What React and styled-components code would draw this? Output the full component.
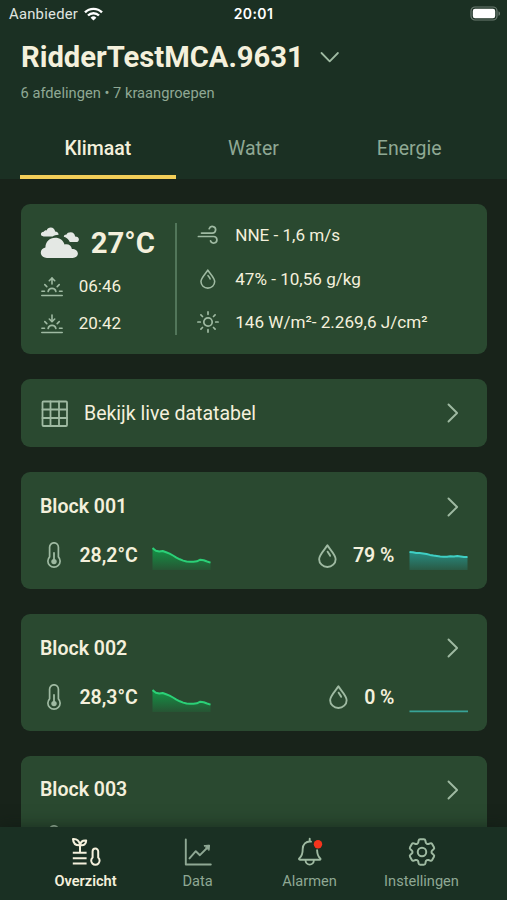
import React, { Component } from 'react';
import styled, { createGlobalStyle } from 'styled-components';
import { HiOutlineCog6Tooth } from 'react-icons/hi2';

const GlobalStyle = createGlobalStyle`
  * {
    box-sizing: border-box;
  }

  body {
    margin: 0;
    background: #18231a;
    color: #f4f0dc;
    font-family: Roboto, 'Liberation Sans', sans-serif;
  }

  svg {
    display: block;
    flex: none;
    fill: none;
    stroke-linecap: round;
    stroke-linejoin: round;
  }
`

const Screen = styled.div`
  display: flex;
  flex-direction: column;
  width: 507px;
  height: 900px;
  overflow: hidden;
`

const TopArea = styled.header`
  flex: none;
  height: 179px;
  padding: 0 20px;
  background: #1b3023;
`

const StatusBar = styled.div`
  display: grid;
  grid-template-columns: 1fr auto 1fr;
  align-items: center;
  height: 27px;
  margin: 0 -11px;
  color: #fff;
  font-size: 14.8px;
`

const Carrier = styled.div`
  display: flex;
  align-items: center;
  gap: 6px;
  letter-spacing: 0.25px;
  color: #e0e5e0;
`

const Clock = styled.div`
  font-family: Inter, Roboto, sans-serif;
  font-weight: 600;
  font-size: 14px;
  letter-spacing: 0.4px;
`

const Battery = styled.div`
  justify-self: end;
  margin-right: -3px;
`

const TitleRow = styled.div`
  display: flex;
  align-items: center;
  gap: 16px;
  height: 60px;
  padding-left: 1px;
`

const Title = styled.h1`
  margin: 0;
  font-size: 29.2px;
  font-weight: 700;
  line-height: 60px;
  white-space: nowrap;
`

const Subtitle = styled.p`
  margin: -2px 0 0;
  padding-left: 0.5px;
  color: #8fa894;
  font-size: 14.7px;
  line-height: 16px;
`

const Tabs = styled.nav`
  display: grid;
  grid-template-columns: repeat(3, 1fr);
  height: 63px;
  margin-top: 15px;
`

const Tab = styled.a`
  padding-top: 21px;
  border-bottom: 4px solid ${props => (props.$active ? '#f2ce58' : 'transparent')};
  color: ${props => (props.$active ? '#f4f0dc' : '#8fa894')};
  font-size: 19.5px;
  font-weight: ${props => (props.$active ? 500 : 400)};
  line-height: 24px;
  text-align: center;
`

const Content = styled.main`
  display: flex;
  flex: 1;
  flex-direction: column;
  gap: 24.8px;
  min-height: 0;
  padding: 25px 20px 0 20.7px;
  overflow: hidden;
`

const Card = styled.section`
  flex: none;
  border-radius: 9px;
  background: #2a4930;
`

const WeatherCard = styled(Card)`
  display: flex;
  height: 150.3px;
  padding: 19px;
`

const Current = styled.div`
  display: flex;
  flex-direction: column;
  width: 137px;
  border-right: 2px solid #52765a;
`

const Temperature = styled.div`
  display: flex;
  flex: none;
  align-items: center;
  gap: 11px;
  height: 44px;
  padding-bottom: 5px;
  font-size: 29.3px;
  font-weight: 700;
`

const SunTime = styled.div`
  display: flex;
  flex: none;
  align-items: center;
  gap: 16px;
  height: 37px;
  padding-left: 1px;
  font-size: 17px;

  svg {
    margin-top: 2px;
  }
`

const Measurements = styled.div`
  display: flex;
  flex-direction: column;
  justify-content: space-between;
  margin: -1px 0 0 20px;
`

const Measurement = styled.div`
  display: grid;
  grid-template-columns: 22px 1fr;
  column-gap: 16.5px;
  align-items: center;
  justify-items: center;
  height: 26px;
  font-size: 17.1px;
  white-space: nowrap;

  span {
    justify-self: start;
  }
`

const LinkCard = styled(Card)`
  display: flex;
  align-items: center;
  height: 68.4px;
  padding: 0 28px 0 20px;
  font-size: 19.5px;

  span {
    flex: 1;
    padding-left: 16.3px;
  }
`

const BlockCard = styled(Card)`
  height: 116.9px;
  padding: 19.3px 19px 19px 19.3px;
`

const BlockHeader = styled.div`
  display: flex;
  align-items: center;
  justify-content: space-between;
  height: 30px;
  padding-right: 9px;
  font-size: 19.5px;
  font-weight: 600;
`

const BlockValues = styled.div`
  display: flex;
  align-items: center;
  justify-content: space-between;
  height: 34px;
  margin-top: 17px;
`

const Value = styled.div`
  display: flex;
  align-items: center;
  padding-left: ${props => (props.$indent ? '7.5px' : 0)};
  font-size: 19.5px;
  font-weight: 600;

  span {
    padding: 0 14.5px 0 ${props => (props.$indent ? '18px' : '16px')};
  }
`

const ChartBox = styled.div`
  padding-top: 7px;
`

const BottomBar = styled.nav`
  display: grid;
  grid-template-columns: repeat(4, 112px);
  justify-content: center;
  flex: none;
  position: relative;
  height: 73px;
  background: #1a3023;
  box-shadow: 0 -2px 14px rgba(14, 26, 17, 0.5);
`

const BarItem = styled.a`
  display: flex;
  flex-direction: column;
  align-items: center;
  color: ${props => (props.$active ? '#f4f0dc' : '#8fa894')};
  font-size: 14.6px;
  font-weight: ${props => (props.$active ? 600 : 400)};
  line-height: 18px;
`

const BarIcon = styled.div`
  display: flex;
  align-items: center;
  justify-content: center;
  height: 45px;
  padding-top: 5px;
`

const line = '#9fbaa2'

const WifiIcon = () => (
  <svg width="19" height="14" viewBox="0 0 19 14">
    <g stroke="#fff" strokeWidth="2.4" strokeLinecap="butt">
      <path d="M1 5.4a12 12 0 0 1 17 0" />
      <path d="M4 8.5a7.8 7.8 0 0 1 11 0" />
    </g>
    <path d="M9.5 13.6 6.6 10.7a4.2 4.2 0 0 1 5.8 0z" fill="#fff" />
  </svg>
)

const BatteryIcon = () => (
  <svg width="31" height="15" viewBox="0 0 31 15">
    <rect x="1" y="1" width="26" height="13" rx="4" stroke="#6d7c72" strokeWidth="1.2" />
    <rect x="2.8" y="2.8" width="22.4" height="9.4" rx="2.2" fill="#fff" />
    <path d="M28.5 5.2c2 .8 2 3.8 0 4.6z" fill="#6d7c72" />
  </svg>
)

const ChevronDown = () => (
  <svg width="20" height="12" viewBox="0 0 20 12" stroke={line} strokeWidth="1.8">
    <path d="m1.5 2 8.2 8.3L17.9 2" />
  </svg>
)

const ChevronRight = () => (
  <svg width="12" height="20" viewBox="0 0 12 20" stroke={line} strokeWidth="1.9">
    <path d="m1.5 1.5 8.6 8.5-8.6 8.5" />
  </svg>
)

const CloudsIcon = () => (
  <svg width="40" height="32" viewBox="0 0 40 32">
    <g fill="#e4e8e4">
      <path d="M3.6 9.4C1.9 9.4.9 8.4.9 7.1c0-1.5 1.2-2.5 2.9-2.4C4.4 3.7 5.5 3.1 6.7 3.4 7.3 1.6 8.8.6 10.7.6c2.5 0 4.3 1.7 4.4 4 2.2.1 3.5 1.5 3.5 3.1-2.5.1-4.4.7-6 1.7z" />
      <path d="M23.8 9.8c.1-1.5 1.3-2.4 2.8-2.3C27 6 28.6 5.3 30.7 5.3c2.5 0 4.2 1.7 4.4 4.1 2.3 0 3.8 1.3 3.8 3 0 1.6-1.2 2.6-2.9 2.6h-6.2c-1-2.6-3.1-4.3-6-5.2z" />
      <path d="M6.8 30.9C3.2 30.9.8 28.6.8 25.6c0-2.7 1.8-4.6 4.6-5.1.2-5.8 4.2-9.7 9.7-9.7 4.7 0 8.2 2.7 9.4 6.7 4-.9 6.8 1.1 7.4 4.4 3.6 0 6 1.9 6 4.6 0 2.6-2.1 4.4-5.2 4.4z" />
    </g>
  </svg>
)

const SunHorizonIcon = ({ down }) => (
  <svg width="22" height="20" viewBox="0 0 22 20" stroke={line} strokeWidth="1.6">
    <path d="M11 1v6" />
    <path d={down ? 'm8.3 5 2.7 2.7L13.7 5' : 'M8.3 3.7 11 1l2.7 2.7'} />
    <path d="M7.1 14.5a4 4 0 0 1 7.8 0M3.8 7.6l2 2M18.2 7.6l-2 2M.9 14.2h2.6M18.5 14.2h2.6M.8 18.5h20.4" />
  </svg>
)

const WindIcon = () => (
  <svg width="22" height="20" viewBox="0 0 22 20" stroke={line} strokeWidth="1.7">
    <path d="M4.5 8.1h10.8a3.3 3.3 0 1 0-3.1-4.4" />
    <path d="M1.4 11.5h15.2a3.3 3.3 0 1 1-3.1 4.4" />
  </svg>
)

const DropIcon = ({ size = 24, weight = 1.8 }) => (
  <svg width={size * 18 / 23} height={size} viewBox="0 0 18 23" stroke={line} strokeWidth={weight}>
    <path d="M9 1.2C7.6 4 1.1 10.2 1.1 14.5a7.9 7.5 0 0 0 15.8 0C16.9 10.2 10.4 4 9 1.2z" />
    <path d="M9.2 7.4c.6 1.4 2 2.2 2.4 4" />
  </svg>
)

const SunIcon = () => (
  <svg width="22" height="22" viewBox="0 0 22 22" stroke={line} strokeWidth="1.7">
    <circle cx="11" cy="11" r="4.2" />
    <path d="M11 .9v2.4M11 18.7v2.4M.9 11h2.4M18.7 11h2.4M3.9 3.9l1.6 1.6M16.5 16.5l1.6 1.6M3.9 18.1l1.6-1.6M16.5 5.5l1.6-1.6" />
  </svg>
)

const GridIcon = () => (
  <svg width="27" height="27" viewBox="0 0 27 27" stroke={line} strokeWidth="1.8">
    <rect x="1.5" y="1.5" width="24.5" height="24.5" rx="1" />
    <path d="M9.5 1.5V26M18 1.5V26M1.5 9.5H26M1.5 18H26" />
  </svg>
)

const ThermometerIcon = () => (
  <svg width="14" height="27" viewBox="0 0 14 27" stroke={line} strokeWidth="1.7">
    <path d="M2.6 5.2a4.4 4.4 0 0 1 8.8 0v9.7a6.1 6.1 0 1 1-8.8 0z" />
    <path d="M7 11v8" strokeWidth="1.8" />
    <circle cx="7" cy="19.6" r="2.7" fill={line} stroke="none" />
  </svg>
)

const OverviewIcon = () => (
  <svg width="30" height="30" viewBox="0 0 30 30" stroke="#f4f0dc" strokeWidth="2">
    <path d="M9 15V7.5M9 8.3C4.6 8.5 2.2 6 2 2.1 6 1.8 8.7 4 9 8.3zM9.3 8C9.6 4.8 11.8 3.2 15.2 3.5 15.2 7 12.8 8.9 9.3 8z" />
    <path d="M1.8 15.8h13.8M1.8 21.2h13.8M1.8 26.6h13.8" strokeLinecap="butt" />
    <path d="M21.6 14.4a2.8 2.8 0 0 1 5.6 0v6a4.2 4.2 0 1 1-5.6 0z" />
  </svg>
)

const TrendIcon = () => (
  <svg width="28" height="28" viewBox="0 0 28 28" stroke="#8fa894" strokeWidth="1.9">
    <path d="M1.8 1.5v25h25" />
    <path d="m5.5 20.4 6.3-7.2 4.1 4L25 8" />
    <path d="m20.3 7.6 5.2-.5-.4 5z" fill="#8fa894" strokeWidth="1" />
  </svg>
)

const BellIcon = () => (
  <svg width="26" height="30" viewBox="0 0 26 30" stroke={line} strokeWidth="1.9">
    <path d="M14 4.6c-5.2-.6-8.3 3-8.3 7.4 0 5-.9 7.4-3.3 9.2-.8.7-.4 1.5.5 1.5h19.7c1 0 1.3-.9.5-1.5-2-1.6-2.8-3.6-3-7.9" />
    <path d="M12.7 4V1.8M8.6 23.5a4.1 4.1 0 0 0 8.2 0" />
    <circle cx="21" cy="7.3" r="4.2" fill="#f5341d" stroke="none" />
  </svg>
)

const green = [0, 2.7, 3.4, 3, 4.2, 5.6, 7.5, 9.6, 11.3, 12.6, 13.5, 13.8, 13.7, 13.3, 11.7, 12.3, 13.5, 14.6]
const teal = [4.1, 4.3, 5, 5.1, 5.4, 6, 6.9, 7.5, 8, 8.5, 8.8, 8.8, 8.3, 8.4, 8, 8.4, 9, 9]

const Sparkline = ({ id, points, color, top, fade }) => {
  const step = 58 / (points.length - 1)
  const path = points.map((y, i) => `${i ? 'L' : 'M'}${(i * step + 0.5).toFixed(1)} ${y + 1}`).join('')
  return (
    <svg width="59" height="24" viewBox="0 0 59 24">
      <defs>
        <linearGradient id={id} x1="0" y1="0" x2="0" y2="1">
          <stop offset="0" stopColor={top} />
          <stop offset="1" stopColor={top} stopOpacity={fade} />
        </linearGradient>
      </defs>
      <path d={`${path}V23H.5z`} fill={`url(#${id})`} />
      <path d={path} stroke={color} strokeWidth="2" strokeLinecap="butt" />
    </svg>
  )
}

const FlatLine = () => (
  <svg width="59" height="24" viewBox="0 0 59 24">
    <path d="M.5 22.4H59" stroke="#38a397" strokeWidth="1.8" strokeLinecap="butt" />
  </svg>
)

// a block without readings only gets its icon
const blocks = [
  { id: 1, name: 'Block 001', temperature: '28,2°C', humidity: '79 %', history: teal },
  { id: 2, name: 'Block 002', temperature: '28,3°C', humidity: '0 %', history: null },
  { id: 3, name: 'Block 003' },
]

const Block = ({ block }) => (
  <BlockCard>
    <BlockHeader>
      {block.name}
      <ChevronRight />
    </BlockHeader>
    <BlockValues>
      <Value $indent>
        <ThermometerIcon />
        {block.temperature && <span>{block.temperature}</span>}
        {block.temperature && (
          <ChartBox>
            <Sparkline id={`temp${block.id}`} points={green} color="#2bd077" top="#139647" fade={0.15} />
          </ChartBox>
        )}
      </Value>
      {block.humidity && (
        <Value>
          <DropIcon />
          <span>{block.humidity}</span>
          <ChartBox>
            {block.history
              ? <Sparkline id={`hum${block.id}`} points={block.history} color="#3fcfc4" top="#288c82" fade={0.25} />
              : <FlatLine />}
          </ChartBox>
        </Value>
      )}
    </BlockValues>
  </BlockCard>
)

const tabs = ['Klimaat', 'Water', 'Energie']

const barItems = [
  { label: 'Overzicht', icon: <OverviewIcon /> },
  { label: 'Data', icon: <TrendIcon /> },
  { label: 'Alarmen', icon: <BellIcon /> },
  { label: 'Instellingen', icon: <HiOutlineCog6Tooth size={34} color={line} strokeWidth={1.4} /> },
]

class App extends Component {

  state = {
    tab: 'Klimaat',
    page: 'Overzicht',
  }

  render() {
    const { tab, page } = this.state

    return (
      <Screen>
        <GlobalStyle />
        <TopArea>
          <StatusBar>
            <Carrier>Aanbieder <WifiIcon /></Carrier>
            <Clock>20:01</Clock>
            <Battery><BatteryIcon /></Battery>
          </StatusBar>
          <TitleRow>
            <Title>RidderTestMCA.9631</Title>
            <ChevronDown />
          </TitleRow>
          <Subtitle>6 afdelingen • 7 kraangroepen</Subtitle>
          <Tabs>
            {tabs.map(name => (
              <Tab key={name} $active={name === tab} onClick={() => this.setState({ tab: name })}>{name}</Tab>
            ))}
          </Tabs>
        </TopArea>

        <Content>
          <WeatherCard>
            <Current>
              <Temperature><CloudsIcon />27°C</Temperature>
              <SunTime><SunHorizonIcon />06:46</SunTime>
              <SunTime><SunHorizonIcon down />20:42</SunTime>
            </Current>
            <Measurements>
              <Measurement><WindIcon /><span>NNE - 1,6 m/s</span></Measurement>
              <Measurement><DropIcon size={20} weight={1.8} /><span>47% - 10,56 g/kg</span></Measurement>
              <Measurement><SunIcon /><span>146 W/m²- 2.269,6 J/cm²</span></Measurement>
            </Measurements>
          </WeatherCard>

          <LinkCard>
            <GridIcon />
            <span>Bekijk live datatabel</span>
            <ChevronRight />
          </LinkCard>

          {blocks.map(block => <Block key={block.id} block={block} />)}
        </Content>

        <BottomBar>
          {barItems.map(item => (
            <BarItem key={item.label} $active={item.label === page} onClick={() => this.setState({ page: item.label })}>
              <BarIcon>{item.icon}</BarIcon>
              {item.label}
            </BarItem>
          ))}
        </BottomBar>
      </Screen>
    );
  }
}

export default App;
